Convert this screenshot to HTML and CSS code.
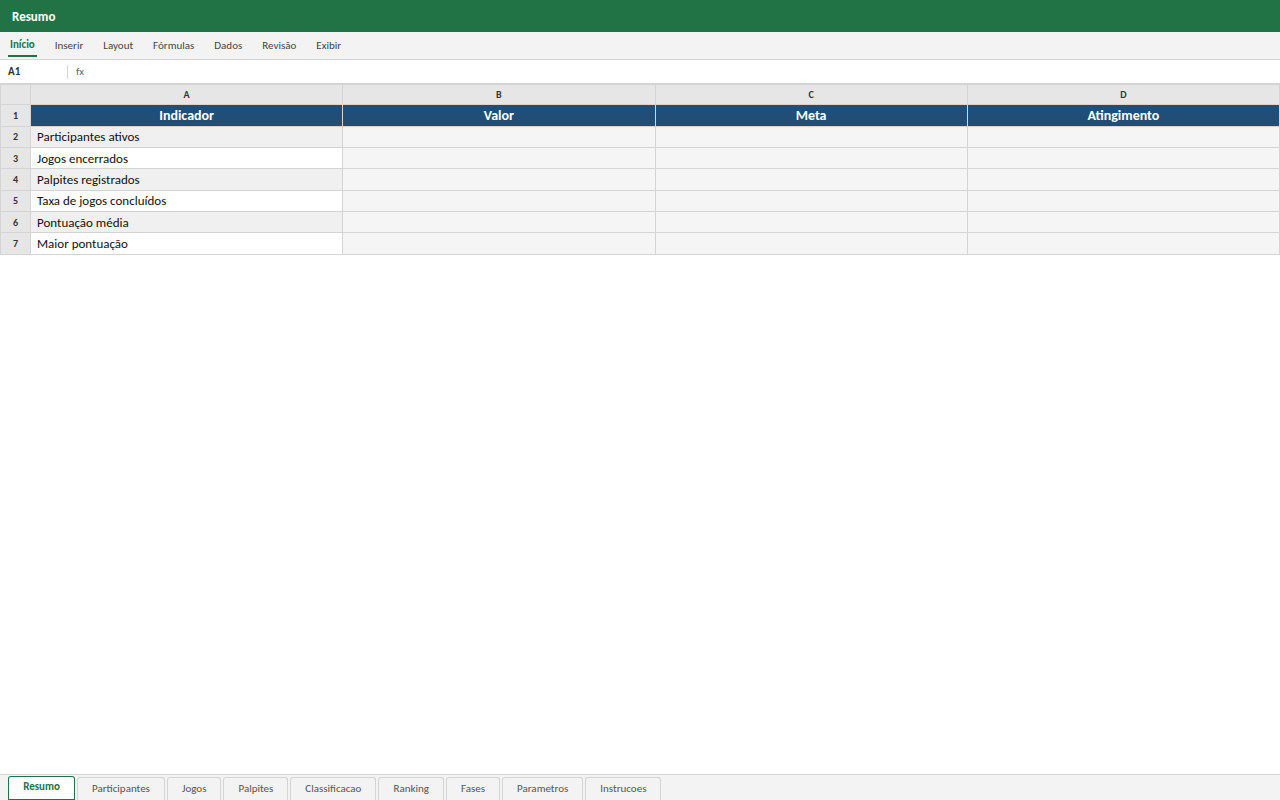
FILE: index.html
```html
<!DOCTYPE html>
<html lang="pt-BR">
<head>
<meta charset="utf-8">
<title>Resumo</title>
<link rel="stylesheet" href="styles.css">
</head>
<body>
<div class="app">
  <header class="titlebar">Resumo</header>
  <nav class="ribbon">
    <span class="rtab active">Início</span>
    <span class="rtab">Inserir</span>
    <span class="rtab">Layout</span>
    <span class="rtab">Fórmulas</span>
    <span class="rtab">Dados</span>
    <span class="rtab">Revisão</span>
    <span class="rtab">Exibir</span>
  </nav>
  <div class="formula">
    <span class="cellref">A1</span>
    <span class="fx">fx</span>
  </div>
  <main class="sheet">
    <table class="grid">
      <colgroup>
        <col class="c0"><col><col><col><col>
      </colgroup>
      <thead>
        <tr><th class="corner"></th><th>A</th><th>B</th><th>C</th><th>D</th></tr>
      </thead>
      <tbody>
        <tr class="head"><th class="rn">1</th><td>Indicador</td><td>Valor</td><td>Meta</td><td>Atingimento</td></tr>
        <tr class="alt"><th class="rn">2</th><td>Participantes ativos</td><td></td><td></td><td></td></tr>
        <tr><th class="rn">3</th><td>Jogos encerrados</td><td></td><td></td><td></td></tr>
        <tr class="alt"><th class="rn">4</th><td>Palpites registrados</td><td></td><td></td><td></td></tr>
        <tr><th class="rn">5</th><td>Taxa de jogos concluídos</td><td></td><td></td><td></td></tr>
        <tr class="alt"><th class="rn">6</th><td>Pontuação média</td><td></td><td></td><td></td></tr>
        <tr><th class="rn">7</th><td>Maior pontuação</td><td></td><td></td><td></td></tr>
      </tbody>
    </table>
  </main>
  <footer class="tabs">
    <span class="stab active">Resumo</span>
    <span class="stab">Participantes</span>
    <span class="stab">Jogos</span>
    <span class="stab">Palpites</span>
    <span class="stab">Classificacao</span>
    <span class="stab">Ranking</span>
    <span class="stab">Fases</span>
    <span class="stab">Parametros</span>
    <span class="stab">Instrucoes</span>
  </footer>
</div>
</body>
</html>
```
FILE: styles.css
```css
* { box-sizing: border-box; }
html, body { margin: 0; height: 100%; }
body { font-family: Carlito, Lato, "Liberation Sans", sans-serif; background: #fff; color: #000; }
.app { display: flex; flex-direction: column; height: 800px; width: 1280px; overflow: hidden; }
.titlebar { height: 32px; background: #217346; color: #fff; font-size: 13px; font-weight: 700; padding-left: 12px; display: flex; align-items: center; flex: none; }
.ribbon { height: 28px; background: #f3f3f3; border-bottom: 1px solid #d4d4d4; display: flex; gap: 4px; padding-left: 8px; flex: none; }
.rtab { font-size: 11px; color: #444; padding: 0 8px; line-height: 27px; height: 27px; }
.rtab.active { color: #217346; font-weight: 700; padding: 0 2px; margin-right: 6px; border-bottom: 2px solid #217346; line-height: 25px; height: 25px; }
.formula { height: 24px; background: #fff; border-bottom: 1px solid #d4d4d4; display: flex; align-items: center; flex: none; }
.cellref { width: 68px; padding-left: 8px; font-size: 11px; font-weight: 700; color: #333; border-right: 1px solid #d4d4d4; height: 14px; line-height: 14px; }
.fx { padding-left: 8px; font-size: 11px; color: #666; }
.sheet { flex: 1; min-height: 0; }
.grid { border-collapse: collapse; table-layout: fixed; width: 1280px; }
.c0 { width: 30px; }
.grid th, .grid td { border: 1px solid #d4d4d4; padding: 0; }
thead th { height: 20px; background: #e6e6e6; font-size: 10px; font-weight: 700; color: #333; text-align: center; }
.rn { background: #e6e6e6; font-size: 10px; font-weight: 700; color: #333; text-align: center; }
tbody tr { height: 21.333px; }
tbody tr.head { height: 21.7px; }
tbody td { font-size: 13px; padding-left: 6px; color: #111; background: #f5f5f5; }
tbody td:first-of-type { padding-left: 6px; background: #fff; }
.alt td:first-of-type { background: #f0f0f0; }
.head td, .head td:first-of-type { background: #1f4e78; color: #fff; font-weight: 700; font-size: 14px; text-align: center; padding: 0; }
.tabs { height: 26px; background: #f3f3f3; border-top: 1px solid #d4d4d4; display: flex; gap: 2px; padding: 2px 0 0 8px; flex: none; }
.stab { height: 24px; padding: 0 14px; font-size: 11px; color: #555; background: #f3f3f3; border: 1px solid #d4d4d4; border-bottom: 0; border-radius: 3px 3px 0 0; line-height: 22px; }
.stab.active { width: 67px; height: 25px; margin-top: -1px; padding: 0; text-align: center; color: #217346; font-weight: 700; background: #fff; border: 1px solid #217346; border-bottom-width: 2px; line-height: 20px; }
```
